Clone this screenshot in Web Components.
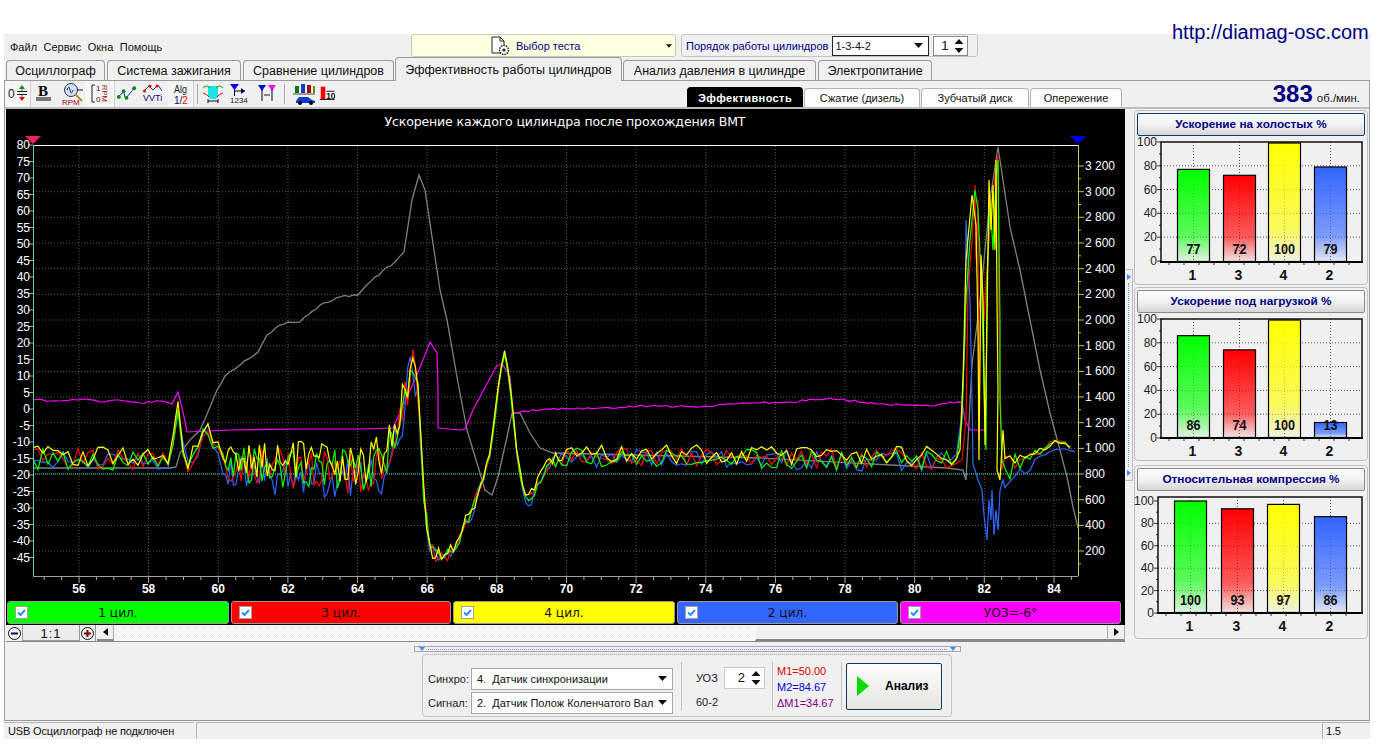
<!DOCTYPE html>
<html lang="ru">
<head>
<meta charset="utf-8">
<title>Осциллограф</title>
<style>
  html, body { margin: 0; padding: 0; background: #fff; }
  body { font-family: "Liberation Sans", Arial, sans-serif; width: 1382px; height: 744px; overflow: hidden; }
</style>
</head>
<body>
<osc-app></osc-app>
<script>
const arrowDown = `<svg width="9" height="5" viewBox="0 0 9 5"><path d="M0 0h9L4.5 5z" fill="#111"/></svg>`

// ---- small form bits
class OscCombo extends HTMLElement {
  connectedCallback() {
    this.attachShadow({ mode: 'open' }).innerHTML = `
      <style>
        :host { display: flex; align-items: center; box-sizing: border-box; height: 22px; background: #fff;
          border: 1px solid #a8a8a8; padding: 0 5px; font-size: 11px; color: #111; }
        span { flex: 1; white-space: nowrap; }
        svg { margin-left: 4px; flex: none; }
      </style>
      <span><slot></slot></span>${arrowDown}`
  }
}
customElements.define('osc-combo', OscCombo)

class OscSpin extends HTMLElement {
  connectedCallback() {
    this.attachShadow({ mode: 'open' }).innerHTML = `
      <style>
        :host { display: flex; align-items: center; justify-content: flex-end; box-sizing: border-box; background: #fff;
          border: 1px solid #c8c8c8; font-size: 13px; color: #111; gap: 6px; padding-right: 3px; }
      </style>
      <slot></slot>
      <svg width="10" height="14" viewBox="0 0 10 14"><path d="M5 0l4.5 5H.5zM.5 9h9L5 14z" fill="#111"/></svg>`
  }
}
customElements.define('osc-spin', OscSpin)

// ---- top row: menu, test selector, firing order
class OscHeader extends HTMLElement {
  connectedCallback() {
    this.attachShadow({ mode: 'open' }).innerHTML = `
      <style>
        :host { display: flex; height: 24px; align-items: flex-start; font-size: 11px; position: relative; }
        .menu { display: flex; gap: 6.5px; width: 407px; padding: 7px 0 0 6px; box-sizing: border-box; color: #111; }
        .test { box-sizing: border-box; width: 265px; height: 23px; background: #ffffe2; border: 1px solid #c9c9b4;
          border-radius: 3px; display: flex; align-items: center; padding: 0 3px 0 78px; color: #000080; }
        .test b { font-weight: normal; flex: 1; margin-left: 4px; }
        .order { box-sizing: border-box; width: 297px; height: 23px; margin: 0 0 0 5px; border: 1px solid #c4c4c4; border-radius: 3px;
          display: flex; align-items: center; padding-left: 4px; color: #000080; }
        .order osc-combo { width: 97px; height: 20px; margin-left: 4px; border-color: #222; padding-left: 2px; }
        .order osc-spin { width: 35px; height: 20px; margin-left: 4px; border-color: #888; }
        a { position: absolute; left: 1168px; top: -13px; font-size: 20px; color: #000080; text-decoration: none; }
      </style>
      <div class="menu"><span>Файл</span><span>Сервис</span><span>Окна</span><span>Помощь</span></div>
      <div class="test">
        <svg width="22" height="20" viewBox="0 0 22 20">
          <path d="M2 1h8l4 4v12H2z" fill="#fff" stroke="#222"/><path d="M10 1v4h4" fill="none" stroke="#222"/>
          <circle cx="14" cy="14" r="4.5" fill="#fff" stroke="#222" stroke-width="1.6" stroke-dasharray="1.5 1"/>
          <circle cx="14" cy="14" r="1.6" fill="#222"/>
        </svg>
        <b>Выбор теста</b>${arrowDown.replace('width="9"', 'width="6"').replace('height="5"', 'height="4"')}
      </div>
      <div class="order">Порядок работы цилиндров<osc-combo>1-3-4-2</osc-combo><osc-spin>1</osc-spin></div>
      <a>http://diamag-osc.com</a>`
  }
}
customElements.define('osc-header', OscHeader)

class OscTabs extends HTMLElement {
  connectedCallback() {
    const tabs = [['Осциллограф', 99], ['Система зажигания', 134], ['Сравнение цилиндров', 151],
      ['Эффективность работы цилиндров', 227, 1], ['Анализ давления в цилиндре', 193], ['Электропитание', 114]]
    this.attachShadow({ mode: 'open' }).innerHTML = `
      <style>
        :host { display: flex; height: 22px; padding-left: 2px; gap: 2px; align-items: flex-end; font-size: 12.5px; color: #111; position: relative; z-index: 2; }
        div { box-sizing: border-box; height: 20px; border: 1px solid #9a9a9a; border-bottom: 0; border-radius: 4px 4px 0 0;
          display: flex; align-items: center; justify-content: center; background: #f0f0f0; }
        .on { height: 24px; margin: 0 -1px -1px; }
      </style>
      ${tabs.map(t => `<div class="${t[2] ? 'on' : ''}" style="width:${t[1]}px">${t[0]}</div>`).join('')}`
  }
}
customElements.define('osc-tabs', OscTabs)

// ---- toolbar
const toolIcons = [
  [26, 1, `<text x="0" y="14.5" font-size="12" fill="#222">0</text><path d="M9 8.5h10M9 11.5h10" stroke="#222"/><path d="M14 2l3 4h-6z" fill="#090"/><path d="M14 18l3-4h-6z" fill="#e00"/><path d="M14 5v3M14 12v3" stroke="#555"/>`],
  [28, 0, `<text x="3" y="13" font-size="15" font-family="Liberation Serif" font-weight="bold" fill="#000">B</text><path d="M1 15h15M1 17h15" stroke="#000"/>`],
  [26, 0, `<circle cx="9" cy="7" r="6.5" fill="#cfe0ff" stroke="#334"/><path d="M5 7q2-6 3 0t3 0" fill="none" stroke="#334"/><path d="M13 11l7 7" stroke="#b88a30" stroke-width="2"/><path d="M15 7h6" stroke="#115"/><text x="0" y="21.5" font-size="8" fill="#a01010">RPM</text>`],
  [30, 1, `<path d="M5 2H2v17h3" fill="none" stroke="#222"/><text x="6" y="8" font-size="8" fill="#222">1</text><text x="6" y="19" font-size="8" fill="#222">0</text><text transform="translate(12 2) rotate(90)" font-size="7.5" fill="#a01010">RPM</text>`],
  [23, 0, `<path d="M1 14l6-5 2 7 9-11" fill="none" stroke="#0a3aa0"/><circle cx="2" cy="14" r="2" fill="#0a8a10"/><circle cx="7" cy="8" r="2" fill="#0a8a10"/><circle cx="10" cy="15" r="2" fill="#0a8a10"/><circle cx="18" cy="5" r="2" fill="#0a8a10"/>`],
  [30, 0, `<path d="M1 8l5-5 4 4 5-5 4 6" fill="none" stroke="#0a3aa0"/><circle cx="1.5" cy="8" r="1.5" fill="#e00"/><circle cx="7" cy="3" r="1.5" fill="#e00"/><circle cx="14" cy="3" r="1.5" fill="#e00"/><text x="0" y="18" font-size="9" fill="#000080">VVTi</text>`],
  [26, 1, `<text x="3" y="10" font-size="11" fill="#222" textLength="13" lengthAdjust="spacingAndGlyphs">Alg</text><text x="3" y="20.5" font-size="10" fill="#000080">1<tspan fill="#222">/</tspan><tspan fill="#e00">2</tspan></text>`],
  [0],
  [24, 0, `<path d="M5 3h10v10l-2 3H7l-2-3z" fill="#19e3e3"/><path d="M0 5q4-4 7 0M13 5q3-4 7 0" stroke="#0a0" fill="none"/><path d="M0 10q4 1 6 4M14 14q2-3 6-4" stroke="#e00" fill="none"/><path d="M5 18h10M5 16v4M15 16v4" stroke="#005"/>`],
  [30, 0, `<path d="M0 1h9L4.5 7z" fill="#00d"/><path d="M4.5 4v9M5 8h10" stroke="#005"/><path d="M11 5l4 3-4 3z" fill="#005"/><text x="0" y="20" font-size="8" fill="#222">1234</text>`],
  [26, 0, `<path d="M0 2h8L4 8z" fill="#00d"/><path d="M10 2h8l-4 6z" fill="#f0f"/><path d="M4 6v12M14 6v12" stroke="#005"/><path d="M6 12h6" stroke="#222"/>`],
  [0],
  [30, 0, `<path d="M2 3h4v7H2z" fill="#0a7a10"/><path d="M8 1h4v9H8z" fill="#1540c0"/><path d="M14 2h4v8h-4z" fill="#a01010"/><path d="M20 3h3v7h-3z" fill="#888000"/><path d="M0 11h24" stroke="#444"/><path d="M3 18l3-4h9l4 3 3 1v2H3z" fill="#0a3ad0"/><circle cx="7" cy="20" r="2"/><circle cx="18" cy="20" r="2"/>`],
  [22, 0, `<path d="M1 3h5v14H1z" fill="#e00"/><path d="M0 17h16M7 8h9" stroke="#111"/><text x="7" y="16" font-size="9" font-weight="bold" fill="#111">10</text>`]
]

class OscToolbar extends HTMLElement {
  connectedCallback() {
    const html = toolIcons.map(t => t[0] === 0 ? '<i></i>' :
      `<div class="${t[1] ? 'on' : ''}" style="width:${t[0]}px"><svg width="24" height="22" viewBox="-2 0 24 22" font-family="Liberation Sans">${t[2]}</svg></div>`).join('')
    this.attachShadow({ mode: 'open' }).innerHTML = `
      <style>
        :host { display: flex; height: 26px; align-items: stretch; }
        div { display: flex; align-items: center; justify-content: center; box-sizing: border-box; }
        .on { background: repeating-conic-gradient(#fff 0 25%, #eee 0 50%) 0 0 / 2px 2px; border-right: 1px solid #d0d0d0; }
        i { width: 1px; margin: 3px; background: #a8a8a8; }
      </style>${html}`
  }
}
customElements.define('osc-toolbar', OscToolbar)

class OscSubtabs extends HTMLElement {
  connectedCallback() {
    const tabs = [['Эффективность', 116, 1], ['Сжатие (дизель)', 116], ['Зубчатый диск', 108], ['Опережение', 92]]
    this.attachShadow({ mode: 'open' }).innerHTML = `
      <style>
        :host { display: flex; align-items: flex-end; gap: 1px; font-size: 11px; color: #111; height: 26px; }
        div { box-sizing: border-box; height: 19px; background: #fdfdfd; border: 1px solid #b4b4b4; border-bottom: 0; border-radius: 4px 4px 0 0;
          display: flex; align-items: center; justify-content: center; }
        .on { height: 20px; background: #000; border-color: #000; color: #fff; font-weight: bold; letter-spacing: .4px; }
      </style>
      ${tabs.map(t => `<div class="${t[2] ? 'on' : ''}" style="width:${t[1]}px">${t[0]}</div>`).join('')}`
  }
}
customElements.define('osc-subtabs', OscSubtabs)

// ---- the oscillogram
function rng(seed) {
  return () => {
    seed = (seed + 0x6D2B79F5) | 0
    let t = Math.imul(seed ^ (seed >>> 15), 1 | seed)
    t = (t + Math.imul(t ^ (t >>> 7), 61 | t)) ^ t
    return ((t ^ (t >>> 14)) >>> 0) / 4294967296
  }
}

const envelope = [[33,458,7],[170,460,7],[174,440,6],[178,408,6],[183,445,6],[188,467,6],[196,450,6],[207,425,5],[213,440,6],
  [220,462,11],[300,468,14],[360,470,14],[385,462,15],[400,420,18],[412,362,14],[418,390,10],[424,500,6],[430,552,6],[440,558,6],
  [455,552,3],[465,525,5],[475,505,6],[490,455,2],[500,375,2],[505,350,2],[510,385,2],[518,465,2],[525,497,3],[530,500,4],
  [545,470,4],[560,456,6],[950,460,7],[960,458,6]]
const tailEnv = [[1005,468,9],[1025,462,6],[1040,450,3],[1055,441,1],[1065,443,1],[1072,450,.5]]

function lerp(pts, x) {
  for (let i = 1; i < pts.length; i++) {
    if (x <= pts[i][0]) {
      const k = (x - pts[i - 1][0]) / (pts[i][0] - pts[i - 1][0])
      return [pts[i - 1][1] + k * (pts[i][1] - pts[i - 1][1]), pts[i - 1][2] + k * (pts[i][2] - pts[i - 1][2])]
    }
  }
  return pts[pts.length - 1].slice(1)
}

function noisy(pts, seed, shift, from, to) {
  const r = rng(seed)
  const out = []
  let x = from
  while (x <= to) {
    const [c, a] = lerp(pts, x)
    out.push([x, c + shift(x) + (r() - .5) * 3 * a])
    x += x > 220 && x < 420 ? 2.6 : (x > 420 && x < 560 ? 3 : 5)
  }
  return out
}

// line with a small tremble, for the rpm and advance curves
function tremble(pts, seed, size, from, to) {
  const r = rng(seed)
  const out = []
  for (let i = 0; i < pts.length; i++) {
    out.push(pts[i])
    if (i + 1 === pts.length) break
    const [x0, y0] = pts[i]
    const [x1, y1] = pts[i + 1]
    if (x0 < from || x1 > to) continue
    const n = Math.floor((x1 - x0) / 4)
    for (let k = 1; k < n; k++) {
      const q = k / n
      out.push([x0 + (x1 - x0) * q, y0 + (y1 - y0) * q + (r() - .5) * 2 * size])
    }
  }
  return out
}

const spikes = {
  yellow: [[960,450],[963,380],[964,340],[966,260],[972,195],[974,210],[976,225],[978,330],[979,460],[981,255],[983,300],[985,445],[987,320],[989,180],[991,230],[993,185],[995,250],[996,160],[997,300],[998,390],[997,470],[1000,480],[1003,430]],
  green: [[962,420],[966,300],[970,240],[975,190],[978,210],[982,300],[984,390],[986,450],[987,280],[990,200],[993,250],[996,180],[998,160],[1000,320],[1000,400],[1002,460]],
  red: [[962,460],[966,420],[968,290],[972,240],[975,185],[976,260],[978,200],[979,440],[981,260],[984,320],[987,270],[992,200],[996,170],[998,155],[999,330],[1002,470]],
  blue: [[961,420],[965,340],[966,220],[970,300],[972,400],[973,465],[975,470],[978,480],[982,490],[984,515],[987,540],[989,500],[991,520],[992,490],[994,535],[996,510],[998,530],[1000,490],[1003,480]]
}

const gray = [[33,468],[170,468],[176,467],[180,453],[190,440],[200,430],[210,407],[217,390],[225,376],[240,365],[258,352],[267,335],[280,325],[288,322],[300,322],[320,305],[340,297],[358,295],[375,277],[395,262],[404,252],[412,200],[419,175],[425,190],[440,290],[447,320],[457,377],[467,430],[480,473],[485,490],[492,495],[498,477],[507,437],[512,413],[520,413],[530,433],[540,448],[553,453],[760,458],[947,468],[963,470],[966,480],[972,365],[980,300],[990,200],[998,147],[1010,227],[1020,270],[1030,320],[1040,370],[1050,413],[1060,450],[1067,477],[1073,507],[1078,528]]
const magentaPts = [[33,400],[60,401],[85,399],[100,402],[115,400],[140,403],[160,401],[172,404],[178,392],[183,412],[187,432],[230,430],[300,429],[360,429],[393,428],[417,375],[430,342],[437,353],[438,390],[438,428],[460,430],[465,429],[473,410],[497,365],[503,365],[510,377],[513,413],[520,412],[545,409],[600,408],[650,406],[700,407],[740,403],[790,402],[830,398],[880,404],[930,406],[950,402],[962,403],[965,420],[970,430],[985,430]]

const path = pts => pts.map((p, i) => (i ? 'L' : 'M') + p[0].toFixed(1) + ' ' + p[1].toFixed(1)).join('')

class OscChart extends HTMLElement {
  connectedCallback() {
    const yL = v => 145 + (80 - v) * 3.3
    const yR = v => 166 + (3200 - v) / 200 * 25.67
    const xV = v => 79 + (v - 56) * 34.82
    let s = ''
    // grid
    for (let v = 200; v <= 3200; v += 200) {
      const cyan = v === 800
      s += `<path d="M33 ${yR(v).toFixed(1)}H1078" stroke="${cyan ? '#6fe' : '#5a5a5a'}" stroke-dasharray="${cyan ? '1 1' : '1 2'}"/>`
    }
    for (let v = 56; v <= 84; v += 2) s += `<path d="M${xV(v).toFixed(1)} 146V576" stroke="#5a5a5a" stroke-dasharray="1 2"/>`

    // traces
    const sig = [
      ['#2f66ff', 'blue', 11, x => (x > 220 && x < 400 ? 10 : x > 420 && x < 520 ? 0 : 2)],
      ['#f00', 'red', 23, x => (x > 220 && x < 400 ? 3 : 0)],
      ['#0f0', 'green', 37, () => 1],
      ['#ff0', 'yellow', 51, x => (x > 220 && x < 400 ? -6 : -3)]
    ]
    s += `<path d="${path(tremble(gray, 5, 1.1, 200, 410))}" fill="none" stroke="#808080" stroke-width="1.3"/>`
    s += `<path d="${path(tremble(tremble(magentaPts, 7, .9, 33, 172), 9, 1, 513, 962))}" fill="none" stroke="#f0f" stroke-width="1.2"/>`
    sig.forEach(t => {
      const head = noisy(envelope, t[2], t[3], 33, 960)
      const tail = t[1] === 'blue'
        ? noisy([[1003,490,6],[1020,468,5],[1030,470,4],[1040,456,2],[1060,448,1],[1077,452,.3]], t[2], () => 0, 1005, 1077)
        : noisy(tailEnv, t[2], () => 0, 1005, 1072)
      s += `<path d="${path(head.concat(spikes[t[1]], tail))}" fill="none" stroke="${t[0]}" stroke-width="1.2"/>`
    })

    // axes
    s += `<path d="M33 145.5H1078" stroke="#fff"/><path d="M33.5 145V576" stroke="#5fd0b0"/><path d="M33 576.5H1078" stroke="#a0a0a0"/><path d="M1078.5 145V576" stroke="#c8c83c"/>`
    for (let v = 80; v >= -45; v -= 5) {
      const y = yL(v)
      s += `<path d="M28 ${y.toFixed(1)}H33" stroke="#aaa"/><text x="30" y="${(y + 4).toFixed(1)}" text-anchor="end" fill="#fff">${v}</text>`
    }
    for (let v = 200; v <= 3200; v += 200) {
      const y = yR(v)
      s += `<path d="M1079 ${y.toFixed(1)}H1084M1079 ${(y + 12.8).toFixed(1)}H1081" stroke="#c8c83c"/>`
      s += `<text x="1085" y="${(y + 4).toFixed(1)}" fill="#fff">${v >= 1000 ? Math.floor(v / 1000) + ' ' + String(v % 1000).padStart(3, '0') : v}</text>`
    }
    for (let v = 55; v <= 84.5; v += .5) {
      const x = xV(v).toFixed(1)
      s += `<path d="M${x} 577V${v % 2 === 0 ? 583 : 580}" stroke="#aaa"/>`
    }
    for (let v = 56; v <= 84; v += 2) s += `<text x="${xV(v).toFixed(1)}" y="593" text-anchor="middle" fill="#fff" font-weight="bold">${v}</text>`
    s += `<path d="M25 136h16l-8 8z" fill="#f0235a"/><path d="M1070 136h16l-8 8z" fill="#0000e6"/>`
    s += `<text x="565" y="126" text-anchor="middle" fill="#fff" font-family="DejaVu Sans" font-size="12.5" textLength="361">Ускорение каждого цилиндра после прохождения ВМТ</text>`

    this.attachShadow({ mode: 'open' }).innerHTML = `
      <style>
        :host { display: block; height: 492px; background: #000; }
        svg { display: block; font-family: "Liberation Sans", sans-serif; font-size: 12px; }
      </style>
      <svg width="1119" height="492" viewBox="6 109 1119 492">${s}</svg>`
  }
}
customElements.define('osc-chart', OscChart)

class OscLegend extends HTMLElement {
  connectedCallback() {
    const items = [['1 цил.', '#00ff00', 222], ['3 цил.', '#ff0000', 220], ['4 цил.', '#ffff00', 222], ['2 цил.', '#3366ff', 221], ['УОЗ=-6°', '#ff00ff', 221]]
    const check = `<svg width="13" height="13" viewBox="0 0 13 13"><rect x=".5" y=".5" width="12" height="12" fill="#fff" stroke="#a0a0a0"/><path d="M3 6.5l2.5 2.5L10 4" fill="none" stroke="#2f8fff" stroke-width="2"/></svg>`
    this.attachShadow({ mode: 'open' }).innerHTML = `
      <style>
        :host { display: flex; gap: 2px; height: 24px; background: #000; padding-left: 1px; box-sizing: border-box; font-family: "DejaVu Sans", sans-serif; font-size: 12.2px; color: #111; }
        div { position: relative; box-sizing: border-box; height: 23px; border: 1px solid #999; border-radius: 3px; display: flex; align-items: center; justify-content: center; }
        svg { position: absolute; left: 7px; top: 4px; }
      </style>
      ${items.map(i => `<div style="width:${i[2]}px;background:${i[1]}">${check}${i[0]}</div>`).join('')}`
  }
}
customElements.define('osc-legend', OscLegend)

class OscScroll extends HTMLElement {
  connectedCallback() {
    const round = (c, plus) => `<svg width="15" height="15" viewBox="0 0 15 15"><circle cx="7.5" cy="7.5" r="6" fill="#f4f4f4" stroke="#111"/><path d="M4 7.5h7${plus ? 'M7.5 4v7' : ''}" stroke="${c}" stroke-width="2"/></svg>`
    this.attachShadow({ mode: 'open' }).innerHTML = `
      <style>
        :host { display: flex; height: 17px; align-items: stretch; border-bottom: 1px solid #888; padding-left: 1px; box-sizing: border-box; font-size: 13px; color: #111; }
        .b { width: 16px; display: flex; align-items: center; justify-content: center; box-sizing: border-box; border-right: 1px solid #999; }
        .z { width: 57px; text-align: center; background: #ececec; border-bottom: 1px solid #999; line-height: 17px; letter-spacing: 1px; box-sizing: border-box; border-right: 1px solid #999; }
        .a { width: 17px; display: flex; align-items: center; justify-content: center; box-sizing: border-box; background: #f0f0f0; border-bottom: 2px solid #888; border-right: 1px solid #aaa; margin-left: 1px; }
        .t { width: 641px; background: repeating-conic-gradient(#fff 0 25%, #eee 0 50%) 0 0 / 2px 2px; }
        .h { flex: 1; background: #f0f0f0; border-left: 1px solid #fff; border-bottom: 2px solid #888; box-sizing: border-box; border-right: 1px solid #aaa; }
      </style>
      <div class="b">${round('#000080')}</div><div class="z">1:1</div><div class="b">${round('#800000', 1)}</div>
      <div class="a"><svg width="5" height="8"><path d="M5 0v8L0 4z" fill="#111"/></svg></div>
      <div class="t"></div><div class="h"></div>
      <div class="a" style="margin:0"><svg width="5" height="8"><path d="M0 0v8l5-4z" fill="#111"/></svg></div>`
  }
}
customElements.define('osc-scroll', OscScroll)

// ---- bar panels on the right
class BarPanel extends HTMLElement {
  connectedCallback() {
    const vals = this.getAttribute('vals').split(',').map(Number)
    const bars = this.getAttribute('bars').split(',').map(Number)
    const [y0, fx, ft, fb, y100, y00] = this.getAttribute('geo').split(',').map(Number)
    const h = +this.getAttribute('h')
    const cols = [['#00ff00', 'g'], ['#ff0000', 'r'], ['#ffff00', 'y'], ['#3366ff', 'b']]
    const yOf = v => y00 - (y00 - y100) * v / 100
    let s = `<defs>${cols.map(c => `<linearGradient id="${c[1]}" x1="0" y1="0" x2="0" y2="1"><stop offset="0" stop-color="${c[0]}"/><stop offset=".72" stop-color="${c[0]}" stop-opacity=".62"/><stop offset="1" stop-color="${c[0]}" stop-opacity=".06"/></linearGradient>`).join('')}</defs>`
    for (let v = 20; v <= 80; v += 20) s += `<path d="M${fx} ${yOf(v).toFixed(1)}H1362" stroke="#555" stroke-dasharray="1 2"/>`
    bars.forEach(b => { s += `<path d="M${b + 16.5} ${ft}V${fb}" stroke="#555" stroke-dasharray="1 2"/>` })
    for (let v = 0; v <= 100; v += 20) {
      const y = yOf(v)
      s += `<path d="M${fx - 4} ${y.toFixed(1)}H${fx}" stroke="#333"/><text x="${fx - 4}" y="${(y + 4).toFixed(1)}" text-anchor="end" fill="#222">${v}</text>`
      if (v < 100) s += `<path d="M${fx - 2} ${(y - (y00 - y100) * .1).toFixed(1)}H${fx}" stroke="#333"/>`
    }
    for (let x = fx + 8; x < 1360; x += 15) s += `<path d="M${x} ${fb}v3" stroke="#333"/>`
    vals.forEach((v, i) => {
      const top = Math.max(yOf(v), ft + 1)
      const x = bars[i]
      s += `<rect x="${x + .5}" y="${top.toFixed(1)}" width="32" height="${(fb - top - .5).toFixed(1)}" fill="url(#${cols[i][1]})" stroke="#000" stroke-width="1.2"/>`
      const w = String(v).length * 7
      s += `<text x="${x + 16.5}" y="${fb - 8.5}" text-anchor="middle" font-size="15" font-weight="bold" fill="#111" textLength="${w}" lengthAdjust="spacingAndGlyphs">${v}</text>`
      s += `<text x="${x + 15.5}" y="${fb + 18}" text-anchor="middle" font-size="14" font-weight="bold" fill="#111">${['1', '3', '4', '2'][i]}</text>`
    })
    s += `<rect x="${fx}" y="${ft}" width="${1362 - fx}" height="${fb - ft}" fill="none" stroke="#000" stroke-width="1.4"/><path d="M${fx - 1} ${fb}H1363" stroke="#000" stroke-width="2"/>`
    this.attachShadow({ mode: 'open' }).innerHTML = `
      <style>
        :host { display: block; box-sizing: border-box; height: ${h}px; border: 1px solid #c0c0c0; border-radius: 4px; padding: 2px; }
        .t { box-sizing: border-box; height: 23px; border: 1px solid ${this.hasAttribute('focus') ? '#123a6a' : '#8a8a8a'}; border-radius: 2px; background: linear-gradient(#fdfdfd, #f2f2f2 50%, #d6d6d6);
          text-align: center; font-size: 11.8px; font-weight: bold; color: #000080; line-height: 21px; }
        svg { display: block; margin: 0 0 0 -2px; overflow: visible; font-family: "Liberation Sans", sans-serif; font-size: 12px; }
      </style>
      <div class="t"><slot></slot></div>
      <svg width="232" height="${h - 29}" viewBox="1135 ${y0} 232 ${h - 29}">${s}</svg>`
  }
}
customElements.define('bar-panel', BarPanel)

// ---- analysis block under the chart
class OscAnalysis extends HTMLElement {
  connectedCallback() {
    this.attachShadow({ mode: 'open' }).innerHTML = `
      <style>
        :host { display: flex; flex-direction: column; align-items: center; font-size: 11px; color: #222; padding-top: 4px; }
        .split { box-sizing: border-box; width: 547px; height: 6px; border: 1px solid #a8a8a8; display: flex; justify-content: space-between; align-items: center; padding: 0 4px; }
        .split i { flex: 1; border-top: 1px dotted #4a9af0; margin: 0 3px; }
        .panel { box-sizing: border-box; width: 530px; height: 63px; margin-top: 2px; border: 1px solid #c4c4c4; border-radius: 4px; display: flex; align-items: center; padding: 0 9px 0 5px; }
        .selects { flex: none; display: grid; grid-template-columns: 43px 202px; row-gap: 2px; align-items: center; margin-top: 10px; }
        .sep { flex: none; width: 1px; height: 48px; background: #c4c4c4; }
        .uoz { flex: none; display: grid; grid-template-columns: 28px 41px; grid-template-rows: 22px 22px; row-gap: 2px; align-items: center; margin: 8px 7px 0 14px; }
        .uoz osc-spin { height: 22px; width: 41px; }
        .m { flex: none; margin: 3px 6px 0 4px; line-height: 16px; white-space: nowrap; width: 58px; }
        button { all: unset; flex: none; box-sizing: border-box; margin: 1px 0 0 4px; width: 96px; height: 47px; border: 1px solid #123a5a; border-radius: 2px;
          background: linear-gradient(#fdfdfd, #e4e4e0); display: flex; align-items: center; font: bold 12px "Liberation Sans", sans-serif; color: #000; }
        button svg { margin: 0 16px 0 10px; }
      </style>
      <div class="split"><svg width="6" height="4"><path d="M0 0h6L3 4z" fill="#2f8fff"/></svg><i></i><svg width="6" height="4"><path d="M0 0h6L3 4z" fill="#2f8fff"/></svg></div>
      <div class="panel">
        <div class="selects">
          <span>Синхро:</span><osc-combo>4.&nbsp; Датчик синхронизации</osc-combo>
          <span>Сигнал:</span><osc-combo>2.&nbsp; Датчик Полож Коленчатого Вал</osc-combo>
        </div>
        <div class="sep" style="margin-left:8px"></div>
        <div class="uoz">
          <span>УОЗ</span><osc-spin>2</osc-spin>
          <span style="grid-column:1/3">60-2</span>
        </div>
        <div class="sep"></div>
        <div class="m"><div style="color:#e00000">M1=50.00</div><div style="color:#0000e0">M2=84.67</div><div style="color:#800080">ΔM1=34.67</div></div>
        <div class="sep"></div>
        <button><svg width="12" height="20"><path d="M0 0l12 10L0 20z" fill="#00dc00"/></svg>Анализ</button>
      </div>`
  }
}
customElements.define('osc-analysis', OscAnalysis)

class OscStatus extends HTMLElement {
  connectedCallback() {
    this.attachShadow({ mode: 'open' }).innerHTML = `
      <style>
        :host { display: flex; height: 18px; font-size: 11px; letter-spacing: -.15px; color: #111; padding-top: 1px; box-sizing: border-box; }
        div { box-sizing: border-box; height: 17px; line-height: 17px; border-top: 1px solid #b4b4b4; border-left: 1px solid #b4b4b4; padding-left: 3px; }
      </style>
      <div style="width:190px;border-left:0;padding-left:4px">USB Осциллограф не подключен</div>
      <div style="width:1125px;margin:0 0 0 2px"></div>
      <div style="width:48px;margin-left:1px">1.5</div>`
  }
}
customElements.define('osc-status', OscStatus)

// ---- whole window
class OscApp extends HTMLElement {
  connectedCallback() {
    this.attachShadow({ mode: 'open' }).innerHTML = `
      <style>
        :host { display: block; width: 1366px; height: 705px; margin: 34px 0 0 4px; background: #f0f0f0; font-family: "Liberation Sans", Arial, sans-serif; }
        .box { box-sizing: border-box; height: 641px; border: 1px solid #9a9a9a; display: flex; flex-direction: column; }
        .top { display: flex; height: 28px; box-sizing: border-box; border-bottom: 2px solid #bdbdbd; }
        .top osc-toolbar { width: 682px; }
        .rpm { flex: 1; display: flex; justify-content: flex-end; align-items: baseline; padding: 0 9px 0 0; font-size: 11.5px; color: #111; gap: 4px; }
        .rpm b { font-size: 24px; color: #000080; line-height: 26px; }
        .work { display: flex; height: 533px; }
        .left { width: 1119px; margin-left: 1px; flex: none; }
        .grip { box-sizing: border-box; width: 8px; height: 212px; margin: 160px 1px 0 0; border: 1px solid #bbb; border-left: 0; display: flex; flex-direction: column; justify-content: space-between; align-items: center; padding: 4px 0; }
        .grip i { flex: 1; border-left: 1px dotted #4a9af0; margin: 3px 0; }
        .right { width: 234px; padding-top: 1px; display: flex; flex-direction: column; }
      </style>
      <osc-header></osc-header>
      <osc-tabs></osc-tabs>
      <div class="box">
        <div class="top">
          <osc-toolbar></osc-toolbar>
          <osc-subtabs></osc-subtabs>
          <div class="rpm"><b>383</b> об./мин.</div>
        </div>
        <div class="work">
          <div class="left">
            <osc-chart></osc-chart>
            <osc-legend></osc-legend>
            <osc-scroll></osc-scroll>
          </div>
          <div class="grip"><svg width="4" height="6"><path d="M0 0l4 3-4 3z" fill="#2f8fff"/></svg><i></i><svg width="4" height="6"><path d="M0 0l4 3-4 3z" fill="#2f8fff"/></svg></div>
          <div class="right">
            <bar-panel focus h="175" vals="77,72,100,79" bars="1177,1223,1268,1314" geo="136,1161,142,262,142,261">Ускорение на холостых %</bar-panel>
            <bar-panel style="margin-top:2px" h="174" vals="86,74,100,13" bars="1177,1223,1268,1314" geo="313,1161,319,438,319,438">Ускорение под нагрузкой %</bar-panel>
            <bar-panel style="margin-top:4px" h="174" vals="100,93,97,86" bars="1174,1221,1267,1314" geo="491,1158,497,613,501,613">Относительная компрессия %</bar-panel>
          </div>
        </div>
        <osc-analysis></osc-analysis>
      </div>
      <osc-status></osc-status>`
  }
}
customElements.define('osc-app', OscApp)
</script>
</body>
</html>
